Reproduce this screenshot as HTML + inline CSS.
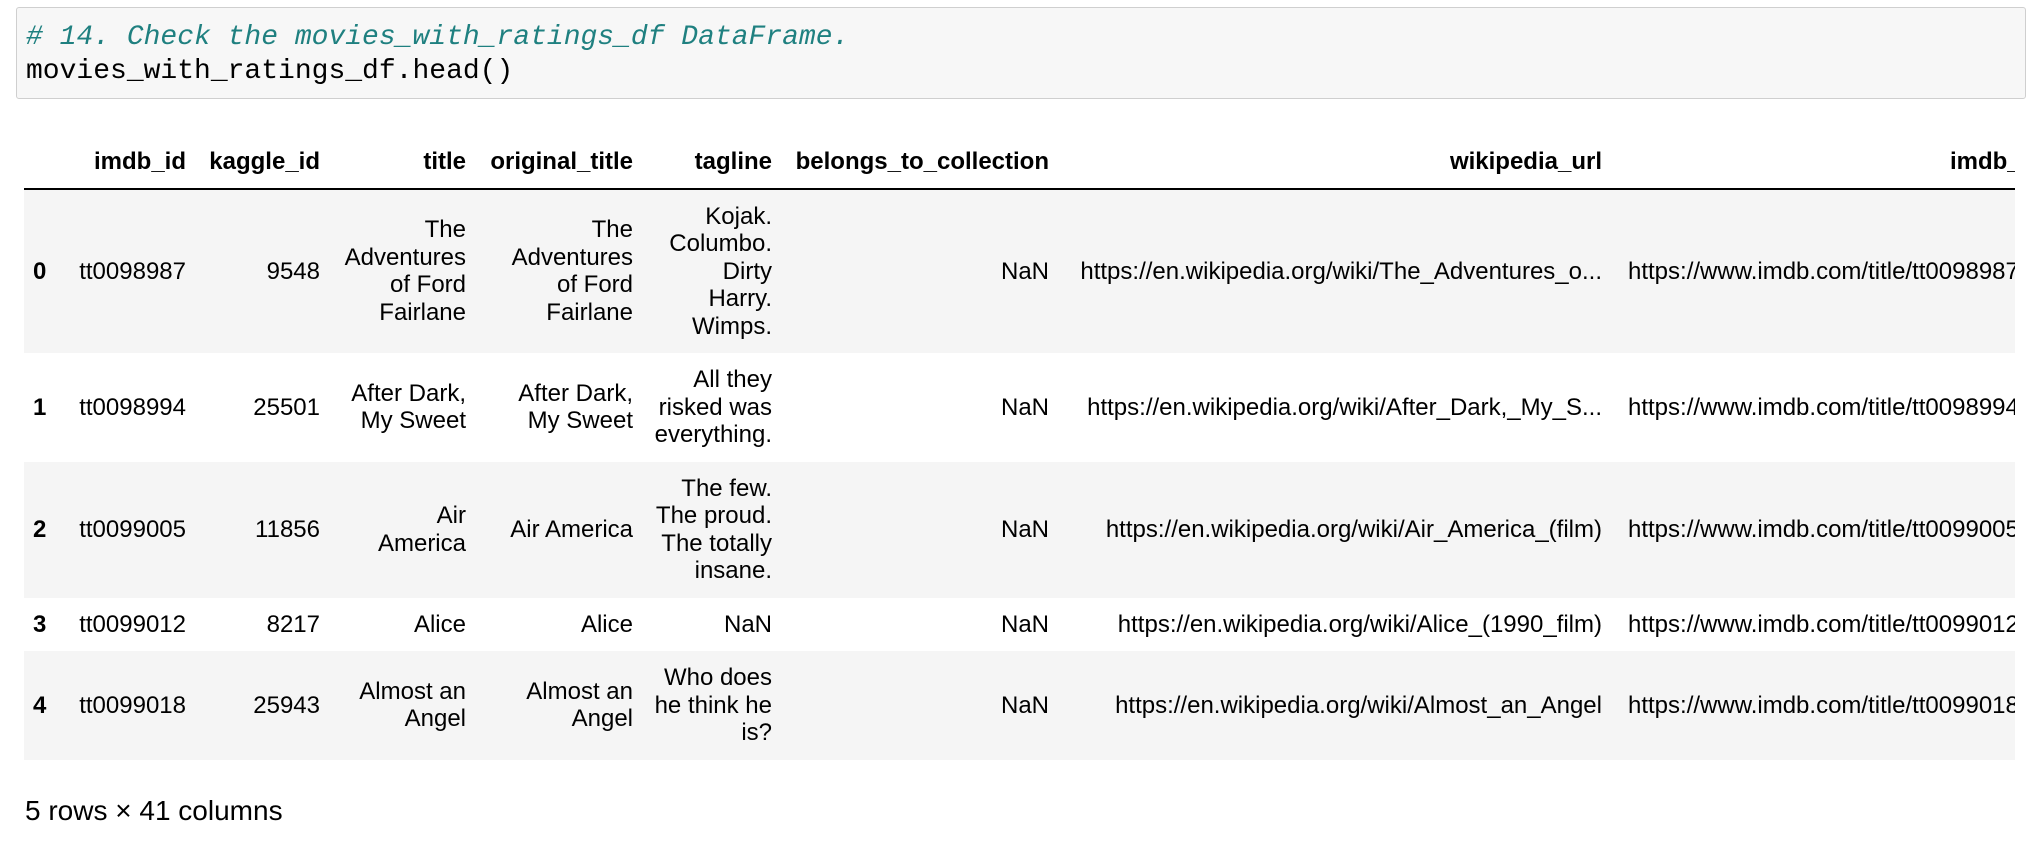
<!DOCTYPE html>
<html><head><meta charset="utf-8"><style>
html,body{margin:0;padding:0;background:#fff;width:2044px;height:860px;overflow:hidden}
.code{position:absolute;left:16px;top:7px;width:2010px;height:92px;background:#f7f7f7;border:1px solid #cfcfcf;border-radius:3px;box-sizing:border-box;padding:13px 0 0 9px;font-family:"Liberation Mono",monospace;font-size:28px;line-height:34px;color:#000;white-space:pre}
.cm{color:#1f8080;font-style:italic}
.wrap{position:absolute;left:24px;top:134px;width:1991px;overflow:hidden}
table{border-collapse:collapse;table-layout:fixed;width:2048px;font-family:"Liberation Sans",Arial,sans-serif;font-size:24px;line-height:27.5px;color:#000}
td,th{text-align:right;white-space:nowrap;padding:13px 10px 13px 10px;vertical-align:middle;overflow:visible}
th{font-weight:bold}
thead th{border-bottom:2px solid #000;padding-bottom:12px;padding-top:14px}
tbody tr:nth-child(odd){background:#f5f5f5}
tbody th{text-align:left;padding-left:9px}
td.l{text-align:left;padding-left:16px}
.foot{position:absolute;left:25px;top:796px;font-family:"Liberation Sans",Arial,sans-serif;font-size:28px;line-height:30px}
</style></head><body>
<div class="code"><span class="cm"># 14. Check the movies_with_ratings_df DataFrame.</span>
movies_with_ratings_df.head()</div>
<div class="wrap"><table>
<colgroup><col style="width:36px"><col style="width:136px"><col style="width:134px"><col style="width:146px"><col style="width:167px"><col style="width:139px"><col style="width:277px"><col style="width:553px"><col style="width:460px"></colgroup>
<thead><tr><th></th><th>imdb_id</th><th>kaggle_id</th><th>title</th><th>original_title</th><th>tagline</th><th>belongs_to_collection</th><th>wikipedia_url</th><th>imdb_link</th></tr></thead>
<tbody>
<tr><th>0</th><td>tt0098987</td><td>9548</td><td>The<br>Adventures<br>of Ford<br>Fairlane</td><td>The<br>Adventures<br>of Ford<br>Fairlane</td><td>Kojak.<br>Columbo.<br>Dirty<br>Harry.<br>Wimps.</td><td>NaN</td><td>https://en.wikipedia.org/wiki/The_Adventures_o...</td><td class="l">https://www.imdb.com/title/tt0098987/</td></tr>
<tr><th>1</th><td>tt0098994</td><td>25501</td><td>After Dark,<br>My Sweet</td><td>After Dark,<br>My Sweet</td><td>All they<br>risked was<br>everything.</td><td>NaN</td><td>https://en.wikipedia.org/wiki/After_Dark,_My_S...</td><td class="l">https://www.imdb.com/title/tt0098994/</td></tr>
<tr><th>2</th><td>tt0099005</td><td>11856</td><td>Air<br>America</td><td>Air America</td><td>The few.<br>The proud.<br>The totally<br>insane.</td><td>NaN</td><td>https://en.wikipedia.org/wiki/Air_America_(film)</td><td class="l">https://www.imdb.com/title/tt0099005/</td></tr>
<tr><th>3</th><td>tt0099012</td><td>8217</td><td>Alice</td><td>Alice</td><td>NaN</td><td>NaN</td><td>https://en.wikipedia.org/wiki/Alice_(1990_film)</td><td class="l">https://www.imdb.com/title/tt0099012/</td></tr>
<tr><th>4</th><td>tt0099018</td><td>25943</td><td>Almost an<br>Angel</td><td>Almost an<br>Angel</td><td>Who does<br>he think he<br>is?</td><td>NaN</td><td>https://en.wikipedia.org/wiki/Almost_an_Angel</td><td class="l">https://www.imdb.com/title/tt0099018/</td></tr>
</tbody></table></div>
<div class="foot">5 rows × 41 columns</div>
</body></html>
